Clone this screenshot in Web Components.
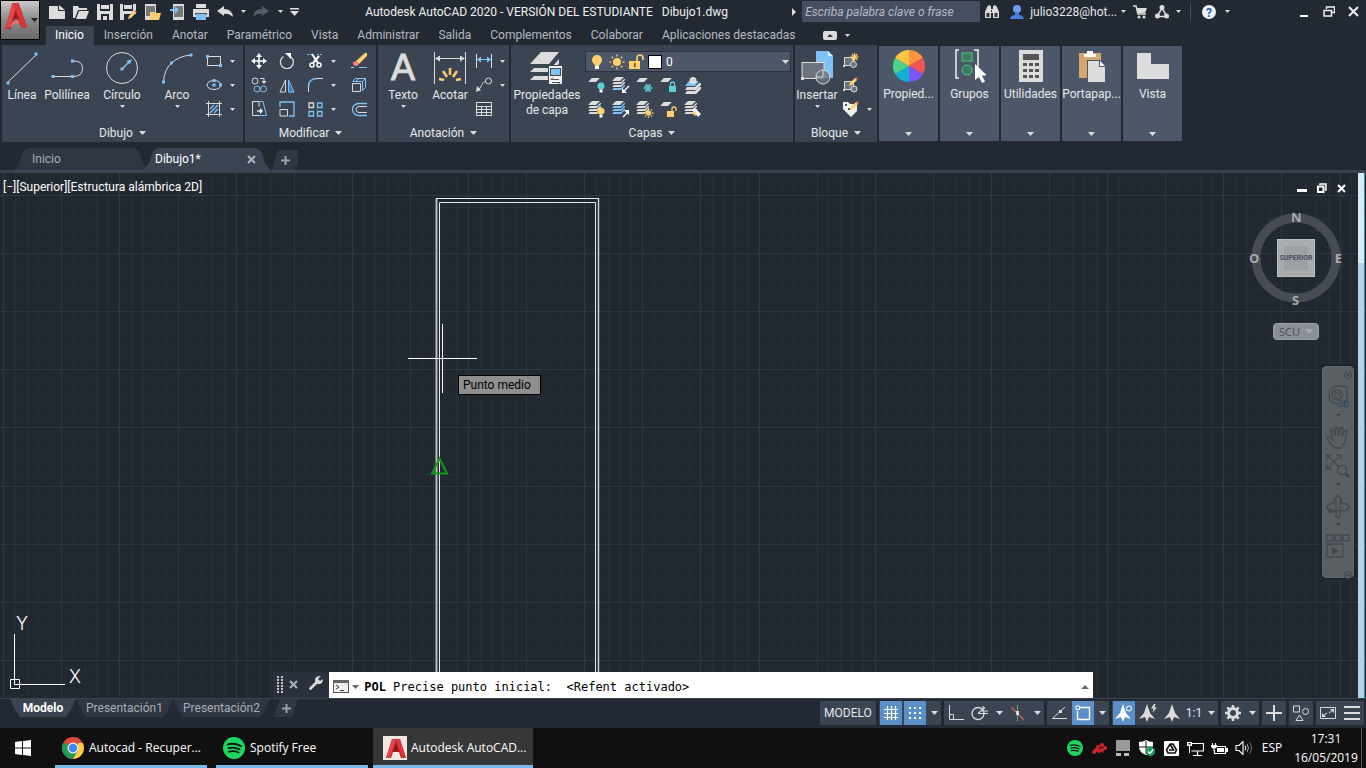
<!DOCTYPE html>
<html lang="es">
<head>
<meta charset="utf-8">
<title>Autodesk AutoCAD 2020</title>
<style>
html,body{margin:0;height:100%}
body{background:#222933;color:#e6e8eb;font:12px/16px "Roboto","Noto Sans",sans-serif;overflow:hidden}
</style>
</head>
<body>
<cad-app></cad-app>
<script>
const W='#dcdcdc', B='#7cc2f8', Y='#ffcf6e', T='#5fd0d8', P='#3b4453';
const sq=(...p)=>p.map(([x,y])=>`<rect x="${x-1.5}" y="${y-1.5}" width="3" height="3" fill="${B}"/>`).join('');
const ln=(d,c=W,w=1,x='')=>`<path d="${d}" fill="none" stroke="${c}" stroke-width="${w}" ${x}/>`;
const fl=(d,c=W,x='')=>`<path d="${d}" fill="${c}" ${x}/>`;
const sheet=(x,y,c=W)=>fl(`M${x+4} ${y}h8l-4 4h-8z`,c);
const band=(x,y,c)=>fl(`M${x+2} ${y+5}h7l3-3h1v1l-4 4h-9z`,c);
const stack=(x,y,a=W,b=W,c=W)=>sheet(x,y,a)+band(x,y,b)+band(x,y+3,b)+band(x,y+6,c);
const bulb=(x,y,c)=>`<circle cx="${x}" cy="${y}" r="3.5" fill="${c}"/>`+fl(`M${x-1.5} ${y+3.5}h3v3h-3z`,'#fff');
const rays=(x,y,r,R,c,n=8)=>Array.from({length:n},(_,i)=>{const a=i*2*Math.PI/n;return ln(`M${x+r*Math.cos(a)} ${y+r*Math.sin(a)}L${x+R*Math.cos(a)} ${y+R*Math.sin(a)}`,c,1.3)}).join('');
const pencil=(x,y)=>fl(`M${x} ${y+9}l1-3 5-5 2 2-5 5z`,Y)+fl(`M${x+6} ${y+1}l1-1 2 2-1 1z`,'#e8655a');
const wedge=(i,c)=>{const a=(i*60-90)*Math.PI/180,b=a+Math.PI/3,f=n=>n.toFixed(2);return fl(`M16 16L${f(16+16*Math.cos(a))} ${f(16+16*Math.sin(a))}A16 16 0 0 1 ${f(16+16*Math.cos(b))} ${f(16+16*Math.sin(b))}z`,c)};
const spot=`<circle cx="11" cy="11" r="11" fill="#1ed760"/>`+ln('M4.5 7.5Q11 5.5 18 9M5.5 11.2Q11 9.6 16.500 12.300M6 14.700Q11 13.400 15.500 15.500','#111',1.8,'stroke-linecap="round"');
const aLogo=fl('M2 20L8 1h8l6 19h-5l-2-6H9l-2 6z','#c22026')+fl('M2 20L8 1h4L6 20z','#e2484b')+fl('M12 5l3 8-6 1z','#8a1418')+fl('M8 1h8l6 19-4-1L12 3z','#d8373b');
const anno=fl('M8 0l3 9 5 6-6-2-2 5-2-5-6 2 5-6z');
const ICONS={
app:[40,40,`<defs><linearGradient id="g" x2="0" y2="1"><stop offset="0" stop-color="#c9c9c9"/><stop offset=".5" stop-color="#8a8a8a"/><stop offset="1" stop-color="#6a6a6a"/></linearGradient></defs><rect width="40" height="40" fill="#050505"/><rect x="1" y="1" width="38" height="38" fill="url(#g)"/><g transform="translate(4 2) scale(1.050 1.280)">${fl('M1 21L8 1h6l8 19h-5l-5-7-4 2-2 6z','#a5161b')+fl('M1 21L8 1h5L6 20z','#e2484b')+fl('M6 20q1-5 8-6l1 3q-5-1-9 3z','#f0706e')+fl('M8 1h6l8 19-5 0-6-14z','#d8373b')}</g>`+fl('M31 18h7l-3.500 4z','#222')],
caret:[7,4,fl('M0 0h7L3.500 4z')],
mcaret:[5,3,fl('M0 0h5L2.500 3z')],
play:[4,8,fl('M0 0l4 4-4 4z')],
'new':[16,14,fl('M0 1h9v5h7v8H0z')+fl('M10 0l6 5h-6z')],
open:[16,14,fl('M0 1h5l1 2h8v2H5L2 13H0z')+fl('M6 6h10l-3 8H3z')],
save:[16,16,fl('M0 0h16v16H0z')+fl('M3 0h10v7H3zM4 10h8v6H4z','#222933')+fl('M4 1h8v4H4zM6 12h4v4H6z')],
saveas:[18,16,fl('M0 0h16v16H0z')+fl('M3 0h10v7H3zM4 10h12v6H4z','#222933')+fl('M4 1h8v4H4z')+pencil(8,6)],
openm:[16,16,fl('M0 0h11v16H0z')+fl('M1 2h9v10H1z','#777')+fl('M5 8h4l1 1h6l-2 7H5z',Y)],
savem:[14,16,fl('M3 0h11v16H3z')+fl('M4 2h9v11H4z','#777')+fl('M0 5h5V2l4 4-4 4V7H0z',B)],
print:[16,16,fl('M3 0h10v4H3zM0 5h16v8H0z')+fl('M2 9h12v2H2z','#555')+fl('M3 10h10v6H3z',B)],
undo:[16,12,fl('M0 5l7-5v3q8 0 9 8-4-4-9-3v2z')],
redo:[16,12,fl('M16 5L9 0v3Q1 3 0 11q4-4 9-3v2z','#565c66')],
custom:[9,8,fl('M0 0h9v1.500H0zM0 3h9L4.500 8z')],
bino:[14,13,fl('M2 2l2-2 2 1v12H0V7zM12 2l-2-2-2 1v12h6V7zM6 4h2v4H6z')+fl('M1.500 8h3v4h-3zM9.500 8h3v4h-3zM6 5h1v2H6z','#333')],
user:[14,14,`<circle cx="7" cy="4" r="4" fill="#6f9cf0"/>`+fl('M5 7h4v3q4 0 5 4H0q1-4 5-4z','#4b7de0')],
cart:[14,14,ln('M0 1h3l2 8h8',W,1.500)+fl('M4 3h10l-2 5H5z')+`<circle cx="6" cy="12" r="1.500" fill="${W}"/><circle cx="11" cy="12" r="1.500" fill="${W}"/>`],
share:[14,14,ln('M7 3L2 11.500h10z',W,1.500)+`<circle cx="7" cy="2.500" r="2.500" fill="${W}"/><circle cx="2.500" cy="11" r="2.500" fill="${W}"/><circle cx="11.500" cy="11" r="2.500" fill="${W}"/>`],
help:[14,14,`<circle cx="7" cy="7" r="7" fill="#f0f2f6"/><text x="7" y="11.500" text-anchor="middle" font-size="12" font-weight="700" fill="#2b5fb0">?</text>`],
min:[8,10,fl('M0 8h8v2H0z','#fff')],
restore:[12,11,ln('M3.500 3V1h8v5.500h-3','#eee',1.500)+ln('M1 4.500h7.500V10H1z','#eee',1.500)],
close:[11,11,ln('M1 1l9 9M10 1l-9 9','#eee',2)],
ribmin:[14,9,`<rect width="14" height="9" rx="2" fill="${W}"/>`+fl('M4 6l3-3 3 3z','#333')],
line:[32,34,ln('M2 31L30 4')+sq([2,32],[30,3])],
pline:[32,34,ln('M2.500 25.500h19.500q9.500 0 9.500-8t-9.500-7.500')+sq([2,25.500],[21.500,25.500],[21.500,10])],
circle:[34,34,`<circle cx="17" cy="17" r="15.500" fill="none" stroke="${W}"/>`+sq([17,18])+ln('M17 18l7-7',B,1.500)+fl('M27 8l-2 5.500L21.500 10z',B)],
arc:[32,34,ln('M2.500 31Q3 19 10.500 12T30 4')+sq([2.500,31],[10.500,12],[30,4])],
rect:[16,14,ln('M1.500 2.500h13v9h-13z')+sq([1.500,2.500],[14.500,11.500])],
ellipse:[16,14,`<ellipse cx="8" cy="7" rx="7" ry="4.500" fill="none" stroke="${W}"/>`+sq([8,2.500],[8,7],[14.500,7])],
hatch:[16,16,ln('M2.500 0v16M13.500 0v16M0 2.500h16M0 13.500h16')+ln('M4 8l4-4M4 12l8-8M8 12l4-4',B,1.500)],
move:[16,16,ln('M8 2v12M2 8h12','#fff',1.500)+fl('M8 0l3 4H5zM8 16l3-4H5zM0 8l4-3v6zM16 8l-4-3v6z','#fff')],
rotate:[16,16,ln('M4.500 3.500A6.500 6.500 0 1 0 12 4',W,1.300)+fl('M6 0h6v6z','#fff')],
trim:[16,16,ln('M0 1.500h5M10 1.500h6',B,1,'stroke-dasharray="2 1"')+ln('M5 1l6 9M12 3L6 10','#fff',2)+`<circle cx="5" cy="12" r="2" fill="none" stroke="#fff" stroke-width="1.500"/><circle cx="12" cy="12" r="2" fill="none" stroke="#fff" stroke-width="1.500"/>`],
erase:[17,16,fl('M5 8L14 0h2v3l-8 8z',Y)+fl('M5 8l3 3q-3 4-5.500 1T5 8z','#f07b83')+ln('M0 14.500h3',W)+ln('M8 14.500h8',B)],
copy:[16,16,`<circle cx="4" cy="4" r="3" fill="none" stroke="${W}"/><circle cx="6" cy="12" r="3" fill="none" stroke="${B}"/><circle cx="12.500" cy="12" r="3" fill="none" stroke="${B}"/>`+ln('M9 1.500h4v3')+fl('M10.500 4h5L13 7z')],
mirror:[16,15,ln('M6.500 2v12H1z')+fl('M9 2v12.500h6z','#3d7db4')+ln('M9.500 2v12H15z',B)],
fillet:[16,16,ln('M1.500 9.500q0-8 9-8',B,1.300)+ln('M10 1.500h6M1.500 9v6')],
explode:[16,16,ln('M1.500 6.500h8v8h-8z')+ln('M1.500 4.500l3-3h10v9l-3 3M11.500 14V4.500H2M11.500 4.500l3-3M5 4l3-2.500',B)],
stretch:[16,16,ln('M8 .5H1.500v14H8M8 .5v5')+ln('M8 .5h4l3.500 14H8',B)+ln('M6 10h5','#fff',1.300)+fl('M9 7l3 3-3 3z','#fff')],
scale:[16,16,ln('M1 6V1h14v14H10',B,1.300)+ln('M1 8.500h7.500V15H1z')],
array:[15,15,ln('M1 1h4.500v4.500H1z',W,1.300)+ln('M9.500 1H14v4.500H9.500zM1 9.500h4.500V14H1zM9.500 9.500H14V14H9.500z',B,1.300)],
offset:[17,15,ln('M16 1.500H7.500a6 6 0 0 0 0 12H16',B,1.300)+ln('M16 4.500H8a3 3 0 0 0 0 6h8')],
dim:[32,34,ln('M.5 1v32M31.500 1v32M3 7.500h26')+fl('M1 7.500l5-3v6zM31 7.500l-5-3v6z')+ln('M5 28l5 1M9 20l4 6M16 17v7M23 20l-4 6M27 28l-5 1',Y,2.500)],
lin:[16,14,ln('M.5 0v14M15.500 0v14')+ln('M1 5.500h14',B)+fl('M1 5.500l4-3v6zM15 5.500l-4-3v6z',B)],
leader:[16,16,ln('M10 4.500C5 5 7 9 2 13')+fl('M0 15l1-6 4 4z')+`<circle cx="12.500" cy="4" r="3" fill="none" stroke="${W}"/>`],
table:[16,14,ln('M.5.500h15v13H.500zM.500 4.500h15M.500 7.500h15M.500 10.500h15M5.500 4v10M10.500 4v10',W,1)],
layers:[34,34,fl('M11 1h18L19 13H0z')+fl('M0 21l4-4h17l8-9v5l-10 8z')+fl('M0 29l4-4h17l8-9v5l-10 8z')+fl('M18 14h15v20H18z',P)+fl('M19 15h13v18H19z','#f2f2f2')+fl('M20 17h11v8H20z','#444')+fl('M21 18h9v6h-9z','#79c4f6')+ln('M21 28.500h8M30 31.500h-8M23 26.500l-2 2M28 33.500l2-2','#555')],
lbulb:[16,16,`<circle cx="8" cy="6" r="5" fill="${Y}"/>`+fl('M5 9h6l-1 3H6z',Y)+fl('M6 12h4v3H6z','#fff')],
lsun:[16,16,`<circle cx="8" cy="8" r="4" fill="${Y}"/>`+rays(8,8,5.500,7.500,Y)],
llock:[15,16,fl('M0 7h11v8H0z',Y)+ln('M8 7V4q0-3 3-3t3 3v2',Y,1.700)+fl('M5 9h1.500v4H5z','#5a4a20')],
lcolor:[14,14,'<rect x=".5" y=".5" width="13" height="13" fill="#fff" stroke="#000"/>'],
la:[18,17,sheet(0,1)+bulb(13,9,T)],
lb:[18,17,stack(0,0,W,W,B)+ln('M17 9l-5 5','#fff',1.500)+fl('M10 11v5h5z','#fff')],
lc:[18,17,sheet(0,1)+rays(12,11,0,4.500,T,6)+`<circle cx="12" cy="11" r="3" fill="none" stroke="${T}"/>`],
ld:[18,17,sheet(0,1)+fl('M9 9h7v6H9z',T)+ln('M10.500 9V7q0-2 2-2t2 2v2',T,1.300)],
le:[18,17,fl('M5 4h10l-4 5H1z',B)+fl('M3 10h8l4-4h2v2l-5 5H1z')+fl('M3 14h8l4-4h2v2l-5 5H1z')+`<circle cx="9" cy="3.500" r="3.500" fill="${W}"/>`],
lf:[18,17,stack(0,0)+bulb(13,10,Y)],
lg:[18,17,stack(0,0,W,B,B)+ln('M11 16l5-5','#fff',1.500)+fl('M17 14V9h-5z','#fff')],
lh:[18,17,stack(0,0)+`<circle cx="12.500" cy="12" r="2.700" fill="${Y}"/>`+rays(12.500,12,3.500,5,Y)],
li:[18,17,sheet(0,1)+fl('M7 10h7v6H7z',Y)+ln('M12 10V8q0-2 2-2t2 2v2',Y,1.300)],
lj:[18,17,stack(0,0)+fl('M8 9l3-2 6 6-3 3z','#fff')+fl('M8 12l3-2 2 3-2 2z',Y)],
insert:[32,34,fl('M15 0h12l5 5v22H15z',B)+fl('M27 0v5h5','#dff0fc')+`<rect x="1" y="11.500" width="22" height="16" fill="#6d7480" stroke="${W}"/><circle cx="22" cy="26" r="7" fill="#6d7480" fill-opacity=".8" stroke="${W}"/>`+ln('M22 19v7h-7')+fl('M0 26h3v3H0z')],
blk:[16,16,`<rect x="1.500" y="4.500" width="9" height="8" fill="#6d7480" stroke="${W}"/><circle cx="10.500" cy="11.500" r="3" fill="#6d7480" stroke="${W}"/>`+rays(11.500,4,0,4,Y)+fl('M0 12h2v2H0z')],
bedit:[16,16,`<rect x="1.500" y="4.500" width="9" height="8" fill="#6d7480" stroke="${W}"/><circle cx="11" cy="12" r="3" fill="#6d7480" stroke="${W}"/>`+pencil(6,0)+fl('M0 12h2v2H0z')],
battr:[17,16,fl('M0 1h5l2 2h7v7l-6 6-8-8z','#f0f0f0')+fl('M2 3h2v2H2zM5 7h2v2H5z','#555')+pencil(7,0)],
wheel:[32,32,wedge(0,'#ff9340')+wedge(1,'#ee5658')+wedge(2,'#7e55f6')+wedge(3,'#12afd0')+wedge(4,'#4fd088')+wedge(5,'#ffc442')],
group:[32,34,ln('M5 1H2v28h3M20 1h4v18','#eee',1.500)+`<rect x="8" y="4" width="10" height="8" fill="#3c7d62" stroke="#4bc98a"/><circle cx="13" cy="21" r="5" fill="#3c7d62" stroke="#4bc98a"/>`+fl('M21 15v16l4-3 3 6 3-1.500-3-6h5z','#fff')],
calc:[24,32,fl('M0 0h24v32H0z')+fl('M4 4h16v6H4zM4 13h4v3H4zM10 13h4v3h-4zM16 13h4v3h-4zM4 19h4v3H4zM10 19h4v3h-4zM16 19h4v3h-4zM4 25h4v3H4zM10 25h4v3h-4zM16 25h4v3h-4z','#555')],
paste:[26,32,fl('M0 3h22v25H0z','#d6a76c')+fl('M5 4h3V1h6v3h3v3H5z','#fff')+fl('M8 10h13l5 6v16H8z','#4c586a')+fl('M9 11h11v6h6v15H9z')+fl('M21 11l5 5h-5z','#fff')],
view:[32,26,fl('M0 0h14v11h18v15H0z')],
tabx:[9,9,ln('M1 1l7 7M8 1l-7 7','#aeb3ba',2)],
plus:[9,9,fl('M3.500 0h2v3.500H9v2H5.500V9h-2V5.500H0v-2h3.500z','#9aa0a8')],
grip:[7,18,fl('M0 0h2v2H0zM4 0h2v2H4zM0 3h2v2H0zM4 3h2v2H4zM0 6h2v2H0zM4 6h2v2H4zM0 9h2v2H0zM4 9h2v2H4zM0 12h2v2H0zM4 12h2v2H4zM0 15h2v2H0zM4 15h2v2H4z','#c8c8c8')],
wrench:[14,14,ln('M1.500 12.500l7-7',W,2.800,'stroke-linecap="round"')+fl('M12 0L9 3l2 2 3-2q0 5-4 5T6 4q0-4 6-4z')],
prompt:[16,13,'<rect x=".5" y=".5" width="15" height="12" fill="#eee" stroke="#555"/>'+fl('M0 0h16v3H0z','#666')+ln('M3 5l3 2-3 2M7 10.500h4','#444')],
dark:[7,4,fl('M0 0h7L3.500 4z','#666')],
up:[8,4,fl('M0 4h8L4 0z','#666')],
wmin:[10,10,fl('M0 6h10v3H0z','#fff')],
wres:[10,10,ln('M3 2V1h6v6H8','#fff',1.500)+ln('M1 3.500h5.500V9H1z','#fff',2)],
wclose:[9,9,ln('M1 1l7 7M8 1L1 8','#fff',2)],
grid:[16,16,ln('M4.500 1v14M8.500 1v14M12.500 1v14M1 4.500h14M1 8.500h14M1 12.500h14','#fff',1.200)],
snap:[14,14,[1,6,11].map(y=>[1,6,11].map(x=>`<rect x="${x}" y="${y}" width="2" height="2" fill="#fff"/>`).join('')).join('')],
ortho:[16,16,ln('M1.500 0v14.500H16M1.500 9.500h4v5')],
polar:[18,16,`<circle cx="7" cy="8.500" r="6" fill="none" stroke="${W}" stroke-width="1.300"/>`+ln('M7 8.500h10M7 8.500l7-6M12 1v5h5',W,1.200)],
iso:[16,16,ln('M1 2l13 13','#c8605f',1.300)+ln('M7.500 0v16','#4fb070')+fl('M6 6h3v4H6z','#ddd')],
track:[16,14,ln('M14 1L1.500 12.500H16')+fl('M8 4h3v3H8z')],
osnap:[16,16,ln('M5 2.500h9.500v12h-12V6','#fff',1.300)+ln('M1 1h3.500v3.500H1z','#fff',1)],
anno1:[18,18,anno.replace(W,'#fff')+'<circle cx="14" cy="4.500" r="2.500" fill="none" stroke="#fff"/>'],
anno2:[18,18,anno+fl('M15 0l-3 4.500h2.500l-1 4 4.500-5h-2.500l1-3.500z')],
anno3:[16,18,anno],
gear:[16,16,`<circle cx="8" cy="8" r="4.500" fill="none" stroke="${W}" stroke-width="3"/>`+ln('M8 0v4M8 12v4M0 8h4M12 8h4M2.300 2.300l3 3M10.700 10.700l3 3M2.300 13.700l3-3M10.700 5.300l3-3',W,2.500)],
cross:[16,16,ln('M8 0v16M0 8h16',W,2)],
isol:[16,16,ln('M.5 1h6v6h-6zM6.500 10l3.500 5.500H3z')+`<circle cx="12.500" cy="6.500" r="3" fill="none" stroke="${W}"/>`],
full:[16,12,ln('M.5.500h15v11H.500zM9 6l4-3M7 6L3 9',W)+fl('M10 2h4v4zM2 10h4l-4-4z')],
menu:[16,14,fl('M0 0h16v2H0zM0 6h16v2H0zM0 12h16v2H0z')],
win:[16,16,fl('M0 2l7-1v6.500H0zM8 1l8-1v7.500H8zM0 8.500h7V15l-7-1zM8 8.500h8V16l-8-1z','#fff')],
chrome:[22,22,`<circle cx="11" cy="11" r="11" fill="#dd4b3e"/>`+fl('M1.500 5.500L11 22A11 11 0 0 1 1.500 5.500z','#1a9f5a')+fl('M1.500 5.500l5 8L11 22 15.700 13.500z','#1a9f5a')+fl('M11 22l5-8.500V6h4.700A11 11 0 0 1 11 22z','#fccd43')+'<circle cx="11" cy="11" r="5.500" fill="#f1f1f1"/><circle cx="11" cy="11" r="4.300" fill="#4587f3"/>'],
spotify:[22,22,spot],
acad:[24,24,'<rect width="24" height="24" fill="#f2e6e2"/><g transform="translate(1 2)">'+aLogo+'</g>'],
tspot:[16,16,`<g transform="scale(.727)">${spot}</g>`],
tred:[15,13,[[2,10],[6,5],[7,9],[10,3],[13,6],[4,8],[10,8]].map(([x,y])=>`<circle cx="${x}" cy="${y}" r="2" fill="#d3262c"/>`).join('')+ln('M8 2v9M4 4l8 7','#a01c20')],
tmon:[14,16,fl('M0 0h14v11H0z','#9a9a9a')+fl('M0 13h5v3H0zM8 13h5v3H8z','#bbb')],
tshield:[16,16,fl('M7 0q3 2 7 2v5q0 5-7 8Q0 12 0 7V2q4 0 7-2z','#fff')+ln('M7 1v13M0 7h14','#101010',1)+'<circle cx="11.500" cy="11.500" r="4.500" fill="#17a05c"/>'+ln('M9 11.500l2 2 3-4','#fff',1.300)],
tdrive:[15,15,'<rect width="15" height="15" rx="1" fill="#fff"/>'+ln('M6 3h3l3.500 6-1.500 3H4L2.500 9zM6 3l3.500 6H5',"#111",1.600)],
tnet:[17,15,ln('M4.500 2.500h12v7.500h-12M10.500 10v4M6 14.500h9','#fff',1.200)+fl('M0 1h5v4H0zM2 5h1v7H2z','#fff')+fl('M1.500 2h2v1.500h-2z','#111')],
tbat:[17,13,ln('M5 4.500h9.500v7H3.500V8','#fff',1.200)+fl('M6 6h7v4H6zM15 6h2v4h-2z','#fff')+ln('M3 5v4M1.500 1v2M4.500 1v2','#fff')+fl('M0 3h6v2q-3 3-6 0z','#fff')],
tvol:[17,14,ln('M1 4.500h3l4-4v13l-4-4H1z','#fff',1.100)+ln('M10 4.500q2 2.500 0 5','#fff')+ln('M12 3q3 4 0 8','#aaa')+ln('M14.500 1.500q4 5.500 0 11','#777')],
cube:[92,92,`<circle cx="46" cy="46" r="40" fill="none" stroke="#474c54" stroke-width="9"/><rect x="27.500" y="27.500" width="37" height="37" fill="#a9abad" stroke="#bcbebf"/><rect x="34" y="34" width="24" height="24" fill="#9da1a5"/>`],
scucaret:[8,5,fl('M0 0h8L4 5z','#a4a8ae')],
nwheel:[24,24,ln('M17 20q4-3 4-8V4q0-3-3-3h-6A9 9 0 0 0 3 10q0 9 10 9','#43484e',1.300)+'<circle cx="11" cy="10" r="5" fill="none" stroke="#43484e" stroke-width="1.300"/><circle cx="11" cy="10" r="2.500" fill="none" stroke="#43484e"/><text x="12" y="22" font-size="9" font-weight="700" fill="#3b4c68">2D</text>'],
nhand:[24,24,ln('M9 23Q3 17 1 13.500q0-3 3-1l3 2.500L4.500 6q0-2.500 2-1.500L9.500 11V3q1-2.500 2.500 0l.5 8 2-8q2-1.500 2.500 0l-1 8.500 3-5.500q2-1.500 2.500 0l-2.500 9q-1 6-4 8z','#43484e',1.300)],
nzoom:[24,24,ln('M1 1l14 14M1 15L15 1M1 6V1h5M10 1h5v5M1 10v5h5','#43484e',1.300)+'<circle cx="16" cy="16" r="4.500" fill="#5a5f64" stroke="#43484e" stroke-width="1.300"/>'+ln('M19 19l4 4','#43484e',3)],
norb:[24,24,ln('M10 23V7H8l4-6 4 6h-2v16z','#43484e',1.300)+ln('M14 9q9 0 9 4t-11 4-11-4q0-3 7-4M5 14l-2 4 5 0','#43484e',1.500)],
nmot:[24,24,ln('M1 1h6v6H1zM9 1h6v6H9zM17 1h6v6h-6zM1 10h16v13H1z','#43484e',1.300)+fl('M6 13l7 4-7 4z','#43484e')],
ncaret:[5,3,fl('M0 0h5L2.500 3z','#3d4248')],
nx:[8,8,'<circle cx="4" cy="4" r="3.500" fill="none" stroke="#43484e"/>'+ln('M2.500 2.500l3 3M5.500 2.500l-3 3','#43484e')],
nm:[8,8,'<circle cx="4" cy="4" r="3.500" fill="none" stroke="#43484e"/>'+ln('M2 4h4','#43484e',1.500)]
};
const RESET='button{font:inherit;color:inherit;background:none;border:0;padding:0;margin:0}a{color:inherit;text-decoration:none}*{box-sizing:border-box}';
/* Registers an element whose shadow root is cloned from a template built of its styles and markup. */
function define(name,css,html){
  const fill=typeof html==='function';
  customElements.define(name,class extends HTMLElement{
    constructor(){super();this.attachShadow({mode:'open'})}
    connectedCallback(){
      if(this.shadowRoot.firstChild)return;
      const t=document.createElement('template');
      t.innerHTML=`<style>${RESET}${css}</style>${fill?html(this):html}`;
      this.shadowRoot.append(t.content.cloneNode(true));
    }
  });
}
const at=(e,n)=>e.getAttribute(n)||'';
define('cad-icon',':host{display:inline-flex;flex:none}svg{display:block}',e=>{
  const [w,h,s]=ICONS[at(e,'name')];
  return `<svg width="${w}" height="${h}" viewBox="0 0 ${w} ${h}" aria-hidden="true">${s}</svg>`;
});
const ic=n=>`<cad-icon name="${n}"></cad-icon>`;
const ib=(n,l,c='')=>`<button class="${c}" aria-label="${l}">${ic(n)}</button>`;

define('title-bar',`
:host{display:flex;height:23px;align-items:center;padding-left:5px}
button{display:flex;width:24px;height:22px;align-items:center;justify-content:center}
.n{width:12px}.m{width:14px}.k{width:20px}
h1{flex:1;margin:0;font:inherit;text-align:center;white-space:pre;color:#f0f0f0}
input{width:178px;height:21px;border:0;border-radius:0;background:#464f61;color:#fff;font:italic 12px/16px "Roboto",sans-serif;padding:0 3px;margin:0 0 0 6px}
input::placeholder{color:#b5bac2;opacity:1}
.acc{width:auto;gap:4px;padding-left:6px;margin-right:2px}
.acc cad-icon:first-child{margin-right:2px}
.sep{width:1px;height:18px;background:#474d57;margin:0 6px}
.win{display:flex;margin-left:58px}.win button{width:25px}`,
ib('new','Nuevo')+ib('open','Abrir')+ib('save','Guardar')+ib('saveas','Guardar como')+ib('openm','Abrir desde web')+ib('savem','Guardar en web')+ib('print','Trazar')+ib('undo','Deshacer')+ib('mcaret','Lista deshacer','n')+ib('redo','Rehacer')+ib('mcaret','Lista rehacer','m')+ib('custom','Personalizar','m')+
`<h1>Autodesk AutoCAD 2020 - VERSIÓN DEL ESTUDIANTE   Dibujo1.dwg</h1>${ic('play')}<input type="text" aria-label="Buscar" placeholder="Escriba palabra clave o frase">`+
ib('bino','Buscar')+`<button class="acc">${ic('user')}julio3228@hot...${ic('mcaret')}</button>`+ib('cart','Tienda')+ib('share','Mantener conexión','k')+ib('mcaret','Más','n')+'<span class="sep"></span>'+ib('help','Ayuda')+ib('mcaret','Más ayuda','n')+
`<div class="win">${ib('min','Minimizar')+ib('restore','Restaurar')+ib('close','Cerrar')}</div>`);

define('ribbon-tabs',`
:host{display:block}nav{display:flex;height:19px;padding:3px 0 0 6px;box-sizing:content-box}
a{padding:0 10px 0 9px;line-height:18px;color:#b6bac1;white-space:nowrap;height:19px}
a.on{background:${P};color:#fff;margin-right:1px}
button{display:flex;align-items:center;gap:8px;margin-left:18px}`,
'<nav>'+['Inicio','Inserción','Anotar','Paramétrico','Vista','Administrar','Salida','Complementos','Colaborar','Aplicaciones destacadas'].map((t,i)=>`<a href="#"${i?'':' class="on"'}>${t}</a>`).join('')+`<button aria-label="Minimizar cinta">${ic('ribmin')+ic('mcaret')}</button></nav>`);

define('ribbon-panel',`
:host{display:flex;flex-direction:column;flex:none;height:97px;background:${P}}
.body{flex:1;display:flex;padding-top:4px}
.cap{display:flex;height:18px;align-items:center;justify-content:center;gap:6px;padding-bottom:1px}`,
e=>`<div class="body"><slot></slot></div><button class="cap">${at(e,'label')}${ic('caret')}</button>`);

define('big-tool',`
:host{display:block;flex:none}
button{display:flex;flex-direction:column;align-items:center;width:100%;line-height:15px;text-align:center}
.i{height:37px;display:flex;align-items:center;justify-content:center;margin-bottom:2px}
.g{font:36px/32px "Liberation Sans",sans-serif;height:32px;color:${W};-webkit-text-stroke:1px ${W}}
cad-icon[name=mcaret]{margin-top:2px}`,
e=>`<button><span class="i">${at(e,'glyph')?`<span class="g">${at(e,'glyph')}</span>`:ic(at(e,'icon'))}</span><slot></slot>${e.hasAttribute('menu')?ic('mcaret'):''}</button>`);

define('small-tool',`
:host{display:flex;height:24px}
button{display:flex;width:24px;align-items:center;justify-content:center}
.c{width:12px}`,
e=>ib(at(e,'icon'),at(e,'label'))+(e.hasAttribute('menu')?ib('mcaret',at(e,'label')+' opciones','c'):''));

define('layer-select',`
:host{display:flex;align-items:center;gap:4px;height:21px;background:#4c586a;border:1px solid #2b323d;padding:0 1px 0 3px;position:relative}
select{flex:1;appearance:none;border:0;background:none;color:#fff;font:inherit;padding:0;margin:0;height:19px}`,
ic('lbulb')+ic('lsun')+ic('llock')+ic('lcolor')+'<select aria-label="Capa"><option>0</option></select>'+ic('caret'));

define('folded-panel',`
:host{display:block;flex:none;width:59px;height:95px;background:#4c586a;margin:1px 0}
button{width:100%;height:95px;display:flex;flex-direction:column;align-items:center}
.i{height:40px;display:flex;align-items:center}
cad-icon[name=caret]{margin-top:auto;margin-bottom:5px}`,
e=>`<button><span class="i">${ic(at(e,'icon'))}</span>${at(e,'label')}${ic('caret')}</button>`);

const st=(i,l,m)=>`<small-tool icon="${i}" label="${l}"${m?' menu':''}></small-tool>`;
define('cad-ribbon',`
:host{display:flex;gap:2px;padding-left:2px;height:97px}
.col{display:grid;grid-auto-rows:24px}
.mod{display:grid;grid-template-columns:24px 24px 40px 24px;grid-auto-rows:24px;column-gap:4px;padding-left:2px}
.w40{width:40px}.w44{width:44px}.w50{width:50px}.w60{width:60px}.w72{width:72px}
.lay{flex:1;padding:2px 2px 0}
.row{display:flex}.row small-tool{width:24px}.row:first-of-type{margin-top:1px}
.d{width:241px}.m,.a{width:131px}.l{width:282px}.b{width:82px}`,
`<ribbon-panel class="d" label="Dibujo"><big-tool class="w40" icon="line">Línea</big-tool><big-tool class="w50" icon="pline">Polilínea</big-tool><big-tool class="w60" icon="circle" menu>Círculo</big-tool><big-tool class="w50" icon="arc" menu>Arco</big-tool><div class="col">${st('rect','Rectángulo',1)+st('ellipse','Elipse',1)+st('hatch','Sombreado',1)}</div></ribbon-panel>
<ribbon-panel class="m" label="Modificar"><div class="mod">${st('move','Desplazar')+st('rotate','Girar')+st('trim','Recortar',1)+st('erase','Borrar')+st('copy','Copiar')+st('mirror','Simetría')+st('fillet','Empalme',1)+st('explode','Descomponer')+st('stretch','Estirar')+st('scale','Escala')+st('array','Matriz',1)+st('offset','Desfase')}</div></ribbon-panel>
<ribbon-panel class="a" label="Anotación"><big-tool class="w50" glyph="A" menu>Texto</big-tool><big-tool class="w44" icon="dim">Acotar</big-tool><div class="col">${st('lin','Lineal',1)+st('leader','Directriz',1)+st('table','Tabla')}</div></ribbon-panel>
<ribbon-panel class="l" label="Capas"><big-tool class="w72" icon="layers">Propiedades<br>de capa</big-tool><div class="lay"><layer-select></layer-select><div class="row">${'abcde'.split('').map(c=>st('l'+c,'Capa')).join('')}</div><div class="row">${'fghij'.split('').map(c=>st('l'+c,'Capa')).join('')}</div></div></ribbon-panel>
<ribbon-panel class="b" label="Bloque"><big-tool class="w44" icon="insert" menu>Insertar</big-tool><div class="col">${st('blk','Crear bloque')+st('bedit','Editar bloque')+st('battr','Editar atributos',1)}</div></ribbon-panel>
<folded-panel icon="wheel" label="Propied..."></folded-panel><folded-panel icon="group" label="Grupos"></folded-panel><folded-panel icon="calc" label="Utilidades"></folded-panel><folded-panel icon="paste" label="Portapap..."></folded-panel><folded-panel icon="view" label="Vista"></folded-panel>`);

define('file-tabs',`
:host{display:flex;height:31px;align-items:flex-end;border-bottom:3px solid ${P};padding:0 0 0 14px;box-sizing:border-box}
a,button{height:22px;line-height:21px;display:flex;align-items:center}
a{color:#a9aeb6;background:#2f3744;clip-path:polygon(0 100%,5px 70%,9px 15%,14px 0,calc(100% - 14px) 0,calc(100% - 9px) 15%,calc(100% - 5px) 70%,100% 100%);width:134px;padding-left:18px}
a.on{width:126px;padding:0 14px 0 11px;margin-left:-4px;background:${P};color:#fff;justify-content:space-between}
.add{width:26px;justify-content:center;background:#2f3744;clip-path:polygon(0 100%,6px 0,100% 0,100% 70%,80% 100%);height:20px;margin-left:2px}`,
`<a href="#">Inicio</a><a href="#" class="on">Dibujo1*${ic('tabx')}</a><button class="add" aria-label="Nuevo dibujo">${ic('plus')}</button>`);

define('view-cube',`
:host{display:grid;width:92px;justify-items:center;color:#a9abae;font:700 13px/14px "Noto Sans",sans-serif}
.d{position:relative;width:92px;height:92px}
.d span{position:absolute}
.n{top:-2px;left:41px}.s{bottom:-3px;left:42px}.o{left:-1px;top:39px}.e{right:0;top:39px}
.t{inset:39px 0 auto;text-align:center;font:700 7px/14px "Roboto",sans-serif;color:#454d5d}
button{display:flex;align-items:center;gap:5px;height:17px;padding:0 5px;border-radius:4px;background:#8b8f98;color:#4e535c;font-weight:400;font-size:11px;margin-top:19px;border:1px solid #9b9fa6}`,
`<div class="d">${ic('cube')}<span class="n">N</span><span class="s">S</span><span class="o">O</span><span class="e">E</span><span class="t">SUPERIOR</span></div><button>SCU${ic('scucaret')}</button>`);

define('nav-bar',`
:host{display:flex;flex-direction:column;align-items:center;width:32px;height:212px;border-radius:4px;background:#5a5f64;border:1px solid #64696e;box-shadow:0 0 0 1px #181d24;box-sizing:border-box}
.r{align-self:flex-end;height:10px;padding-right:1px}
button{display:flex;margin-top:8px}
cad-icon[name=ncaret]{margin-top:5px}.last{margin-top:auto}
cad-icon[name=ncaret] + button{margin-top:8px}button + button{margin-top:5px}`,
`<span class="r">${ic('nx')}</span>`+ib('nwheel','Rueda')+ic('ncaret')+ib('nhand','Encuadre')+ib('nzoom','Zoom')+ic('ncaret')+ib('norb','Órbita')+ic('ncaret')+ib('nmot','ShowMotion')+`<span class="r last">${ic('nm')}</span>`);

define('command-line',`
:host{display:flex;height:26px;background:#2a313d;color:#000}
.h{display:flex;align-items:center;width:56px;padding-left:4px;gap:5px}
.h button:last-child{margin-left:6px}
form{flex:1;display:flex;align-items:center;background:#fff;padding:3px 4px 0;font:12px/16px "DejaVu Sans Mono","Liberation Mono",monospace;white-space:pre}
form button{display:flex;align-items:center;gap:3px;margin-right:5px}
input{flex:1;min-width:0;border:0;outline:0;font:inherit;background:none}
.up{margin:0}`,
`<div class="h">${ic('grip')+ib('tabx','Cerrar')+ib('wrench','Personalizar')}</div><form><button type="button" aria-label="Comandos recientes">${ic('prompt')+ic('dark')}</button><label for="c"><b>POL</b> Precise punto inicial:  &lt;Refent activado&gt;</label><input id="c" type="text"><button type="button" class="up" aria-label="Historial">${ic('up')}</button></form>`);

const grid=()=>{
  let a='',b='';
  for(let k=0;k<260;k++){const v=Math.round(3.300+11.620*k)+.5,h=Math.round(22+11.620*(k-1))+.5;
    if(k%5)a+=`M${v} 0V2000`;else b+=`M${v} 0V2000`;
    if((k+4)%5)a+=`M0 ${h}H3000`;else b+=`M0 ${h}H3000`;}
  return ln(a,'#252d37')+ln(b,'#2f3744');
};
define('drawing-area',`
:host{display:block;flex:1;position:relative;overflow:hidden;background:#212830;border-bottom:1px solid #3a4250}
.g{position:absolute;inset:0;width:100%;height:100%}
.lbl{position:absolute;left:3px;top:6px;color:#fff}
.tip{position:absolute;left:458px;top:202px;height:20px;width:83px;border:1px solid #000;background:#8f8f8f;color:#000;line-height:18px;padding-left:4px}
.ucs{position:absolute;left:0;bottom:0}
.w{position:absolute;right:20px;top:8px;display:flex;gap:10px}
view-cube{position:absolute;right:24px;top:39px}
nav-bar{position:absolute;right:12px;top:193px}
.bar{position:absolute;right:2px;top:0;bottom:0;width:6px;background:linear-gradient(#dbeaf8 0 90px,#b4d1ec 90px)}
.edge{position:absolute;right:1px;top:0;bottom:0;width:1px;background:#2f8fa5}
command-line{position:absolute;left:20%;right:20%;bottom:0}`,
`<svg class="g" aria-hidden="true">${grid()}
${ln('M436.500 600V25.500',"#b9bcc0",2)}${ln('M598.500 25V600','#c9ccd0',1.500)}${ln('M439.500 600V29.500H595.500V600','#e9e9e9',1)}${ln('M436 25.500H599','#e9e9e9',1)}
${ln('M442.500 151V220M408 185.500H477','#fff')}${ln('M439.500 285.500L432 300.500h15z','#0f9b14',2)}</svg>
<span class="lbl">[−][Superior][Estructura alámbrica 2D]</span>
<span class="tip">Punto medio</span>
<svg class="ucs" width="90" height="90" font-family="Inter" font-weight="300" font-size="18" fill="#fff">${ln('M14.500 26V76.500H65M10.500 71.500h9v9h-9z','#fff')}<text x="16" y="22">Y</text><text x="69" y="75">X</text></svg>
<div class="w">${ib('wmin','Minimizar')+ib('wres','Restaurar')+ib('wclose','Cerrar')}</div>
<view-cube></view-cube><nav-bar></nav-bar><div class="bar"></div><div class="edge"></div><command-line></command-line>`);

const on=(i,l)=>ib(i,l,'on'),ca='<button class="c" aria-label="Opciones">'+ic('caret')+'</button>',gr=(...x)=>`<div>${x.join('')}</div>`;
define('status-bar',`
:host{display:flex;height:29px;padding:0 2px 0 10px;justify-content:space-between;box-sizing:border-box}
nav{display:flex;height:18px}
nav a,nav button{display:block;height:18px;line-height:18px;text-align:center;background:#2f3744;color:#a9aeb6;clip-path:polygon(0 0,100% 0,calc(100% - 5px) 60%,calc(100% - 10px) 100%,10px 100%,5px 60%);width:97px}
nav a.on{background:${P};color:#fff;font-weight:700;width:66px}
nav button{width:24px;clip-path:polygon(6px 0,100% 0,75% 100%,0 100%);display:flex;align-items:center;justify-content:center;margin-left:4px}
.r{display:flex;gap:3px;padding:2px 0 3px}
.r div{display:flex;background:${P}}
.r button{display:flex;align-items:center;justify-content:center;width:24px}
.r .c{width:14px}.r .on{background:#5c8fc6;background-clip:content-box;padding:0 1px}
.r .t{width:56px}.r .s{width:20px}`,
`<nav><a class="on" href="#">Modelo</a><a href="#">Presentación1</a><a href="#">Presentación2</a><button aria-label="Nueva presentación">${ic('plus')}</button></nav><div class="r">`+
gr('<button class="t">MODELO</button>')+gr(on('grid','Rejilla'),on('snap','Forzcursor'),ca)+gr(ib('ortho','Orto'),ib('polar','Polar'),ca,ib('iso','Isométrico'),ca)+gr(ib('track','Rastreo'),on('osnap','Refent'),ca)+gr(on('anno1','Visibilidad'),ib('anno2','Autoescala'),ib('anno3','Escala'),'<button class="s">1:1</button>',ca)+gr(ib('gear','Espacio de trabajo'),ca)+gr(ib('cross','Supervisor'))+gr(ib('isol','Aislar'))+gr(ib('full','Pantalla limpia'),ib('menu','Personalización'))+'</div>');

define('task-bar',`
:host{display:flex;height:40px;background:#101010;color:#fff;align-items:stretch;font-family:"Open Sans",sans-serif}
button{display:flex;align-items:center}
.st{width:46px;justify-content:center}
.app{width:152px;margin-left:9px;border-bottom:3px solid #76b9ed;gap:5px;padding-left:7px;padding-top:3px;white-space:nowrap}
.app.on{width:160px;margin-left:5px;background:#373737;padding-left:10px;gap:4px}
.tray{margin-left:auto;display:flex}
.tray button{width:24px;justify-content:center}
.tray .es{width:34px}
.tray .ck{width:74px;flex-direction:column;line-height:18px;gap:1px}
.pk{border-left:1px solid #555;margin:0 0 0 -2px;width:5px}`,
`<button class="st" aria-label="Inicio">${ic('win')}</button><button class="app">${ic('chrome')}Autocad - Recuper...</button><button class="app">${ic('spotify')}Spotify Free</button><button class="app on">${ic('acad')}Autodesk AutoCAD...</button>
<div class="tray">${['tspot','tred','tmon','tshield','tdrive','tnet','tbat','tvol'].map(n=>ib(n,n.slice(1))).join('')}<button class="es">ESP</button><button class="ck"><span>17:31</span><span>16/05/2019</span></button><span class="pk"></span></div>`);

define('cad-app',`
:host{display:flex;flex-direction:column;height:100vh}
header{display:flex}
.t{flex:1;min-width:0}
.a{display:block;height:41px}`,
`<header><button class="a" aria-label="Menú de la aplicación">${ic('app')}</button><div class="t"><title-bar></title-bar><ribbon-tabs></ribbon-tabs></div></header>
<cad-ribbon></cad-ribbon><file-tabs></file-tabs><drawing-area></drawing-area><status-bar></status-bar><task-bar></task-bar>`);
</script>
</body>
</html>
